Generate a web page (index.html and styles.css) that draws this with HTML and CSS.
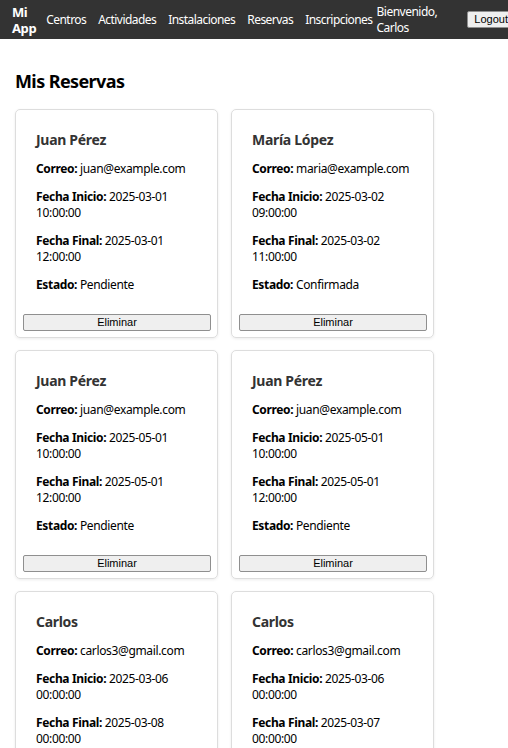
FILE: index.html
```html
<!DOCTYPE html>
<html lang="es">
<head>
<meta charset="utf-8">
<title>Mis Reservas</title>
<link rel="stylesheet" href="styles.css">
</head>
<body>
<nav class="navbar">
  <div class="brand">Mi<br>App</div>
  <ul class="nav-links">
    <li><a href="#">Centros</a></li>
    <li><a href="#">Actividades</a></li>
    <li><a href="#">Instalaciones</a></li>
    <li><a href="#">Reservas</a></li>
    <li><a href="#">Inscripciones</a></li>
  </ul>
  <div class="user">
    <span class="welcome">Bienvenido,<br>Carlos</span>
    <button class="btn logout">Logout</button>
  </div>
</nav>
<main class="container">
  <h2 class="title">Mis Reservas</h2>
  <div class="grid">
    <div class="card">
      <div class="card-body">
        <h3>Juan Pérez</h3>
        <p><strong>Correo:</strong> juan@example.com</p>
        <p><strong>Fecha Inicio:</strong> 2025-03-01 10:00:00</p>
        <p><strong>Fecha Final:</strong> 2025-03-01 12:00:00</p>
        <p><strong>Estado:</strong> Pendiente</p>
      </div>
      <button class="btn del">Eliminar</button>
    </div>
    <div class="card">
      <div class="card-body">
        <h3>María López</h3>
        <p><strong>Correo:</strong> maria@example.com</p>
        <p><strong>Fecha Inicio:</strong> 2025-03-02 09:00:00</p>
        <p><strong>Fecha Final:</strong> 2025-03-02 11:00:00</p>
        <p><strong>Estado:</strong> Confirmada</p>
      </div>
      <button class="btn del">Eliminar</button>
    </div>
    <div class="card">
      <div class="card-body">
        <h3>Juan Pérez</h3>
        <p><strong>Correo:</strong> juan@example.com</p>
        <p><strong>Fecha Inicio:</strong> 2025-05-01 10:00:00</p>
        <p><strong>Fecha Final:</strong> 2025-05-01 12:00:00</p>
        <p><strong>Estado:</strong> Pendiente</p>
      </div>
      <button class="btn del">Eliminar</button>
    </div>
    <div class="card">
      <div class="card-body">
        <h3>Juan Pérez</h3>
        <p><strong>Correo:</strong> juan@example.com</p>
        <p><strong>Fecha Inicio:</strong> 2025-05-01 10:00:00</p>
        <p><strong>Fecha Final:</strong> 2025-05-01 12:00:00</p>
        <p><strong>Estado:</strong> Pendiente</p>
      </div>
      <button class="btn del">Eliminar</button>
    </div>
    <div class="card">
      <div class="card-body">
        <h3>Carlos</h3>
        <p><strong>Correo:</strong> carlos3@gmail.com</p>
        <p><strong>Fecha Inicio:</strong> 2025-03-06 00:00:00</p>
        <p><strong>Fecha Final:</strong> 2025-03-08 00:00:00</p>
        <p><strong>Estado:</strong> Pendiente</p>
      </div>
      <button class="btn del">Eliminar</button>
    </div>
    <div class="card">
      <div class="card-body">
        <h3>Carlos</h3>
        <p><strong>Correo:</strong> carlos3@gmail.com</p>
        <p><strong>Fecha Inicio:</strong> 2025-03-06 00:00:00</p>
        <p><strong>Fecha Final:</strong> 2025-03-07 00:00:00</p>
        <p><strong>Estado:</strong> Pendiente</p>
      </div>
      <button class="btn del">Eliminar</button>
    </div>
  </div>
</main>
</body>
</html>
```

FILE: styles.css
```css
* { box-sizing: border-box; }
html, body { margin: 0; padding: 0; background: #fff; }
body {
  font-family: "Noto Sans", "DejaVu Sans", sans-serif;
  font-size: 12px;
  line-height: 16px;
  letter-spacing: -0.35px;
  color: #000;
  overflow: hidden;
}
.navbar {
  display: flex;
  align-items: center;
  height: 39px;
  background: #333;
  color: #fff;
  padding: 0 0 0 12px;
  white-space: nowrap;
}
.brand {
  font-weight: bold;
  font-size: 13px;
  line-height: 16px;
  letter-spacing: -0.4px;
  margin-right: 10px;
}
.nav-links {
  display: flex;
  list-style: none;
  margin: 0;
  padding: 0;
  gap: 12px;
}
.nav-links a {
  color: #fff;
  text-decoration: none;
  font-size: 12px;
  letter-spacing: -0.55px;
}
.user {
  display: flex;
  align-items: center;
  margin-left: 4px;
}
.welcome { line-height: 16px; letter-spacing: -0.5px; }
.btn {
  font-family: "Liberation Sans", Arial, sans-serif;
  font-size: 11px;
  line-height: 13px;
  letter-spacing: 0;
  color: #000;
  background: #efefef;
  border: 1px solid #8f8f8f;
  border-radius: 2px;
  padding: 1px 6px;
}
.logout { margin-left: 30px; }
.container { padding: 0 15px; }
.title {
  font-size: 18px;
  line-height: 24px;
  font-weight: bold;
  letter-spacing: -0.6px;
  margin: 30px 0 16px;
}
.grid {
  display: grid;
  grid-template-columns: 203px 203px;
  column-gap: 13px;
  row-gap: 12px;
}
.card {
  border: 1px solid #ddd;
  border-radius: 5px;
  box-shadow: 0 1px 3px rgba(0,0,0,0.08);
  padding: 20px 6px 6px 7px;
  display: flex;
  flex-direction: column;
}
.card-body { padding: 0 13px; flex: 1; }
.card h3 {
  font-size: 14px;
  line-height: 19px;
  color: #333;
  letter-spacing: -0.3px;
  margin: 0 0 12px;
}
.card p { margin: 0 0 12px; }
.del { width: 100%; margin-top: 9px; }
```
